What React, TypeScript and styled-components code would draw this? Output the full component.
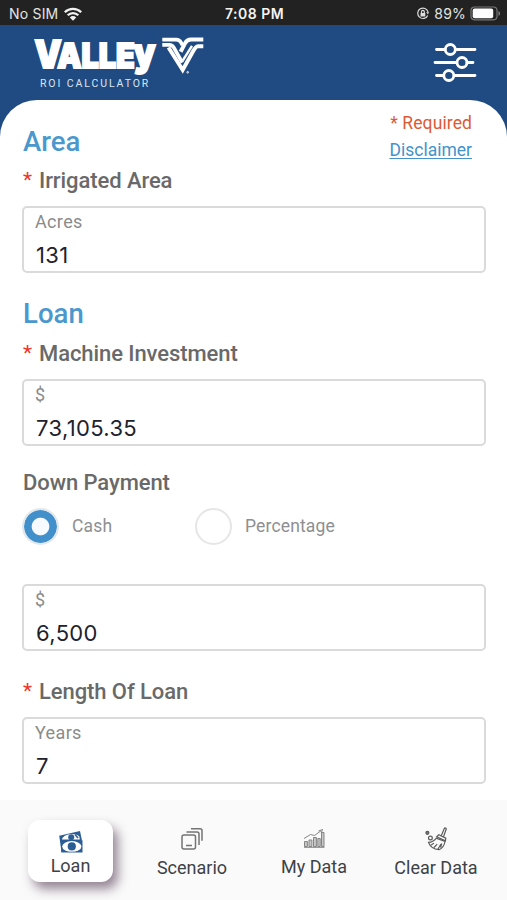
import React from 'react';
import styled, { createGlobalStyle } from 'styled-components';

const Global = createGlobalStyle`
  * { box-sizing: border-box; }
  html, body { margin: 0; padding: 0; background: #fff; }
  body { font-family: Roboto, "Liberation Sans", sans-serif; }
`;

const Screen = styled.div`
  width: 507px;
  height: 900px;
  display: flex;
  flex-direction: column;
  overflow: hidden;
  background: #1f4b82;
`;

const StatusBar = styled.div`
  height: 25px;
  flex: none;
  display: grid;
  grid-template-columns: 1fr auto 1fr;
  align-items: center;
  padding: 2px 6px 0 9px;
  background: #222222;
  color: #e4e4e4;
  font: 400 14px/22px Inter, sans-serif;
`;

const StatusGroup = styled.div<{ $end?: boolean }>`
  display: flex;
  align-items: center;
  justify-content: ${p => (p.$end ? 'flex-end' : 'flex-start')};
  gap: ${p => (p.$end ? '4px' : '6px')};
  letter-spacing: 0.2px;
`;

const Clock = styled.div`
  padding-right: 1px;
  font-weight: 600;
  letter-spacing: 0.5px;
  color: #f4f4f4;
`;

const Header = styled.header`
  height: 75px;
  flex: none;
  display: flex;
  justify-content: space-between;
  padding: 12px 29px 0 34px;
`;

const Brand = styled.div`
  display: flex;
  flex-direction: column;
`;

const LogoRow = styled.div`
  display: flex;
  height: 40px;
  gap: 3px;
`;

const Tagline = styled.div`
  margin: 1px 0 0 6px;
  font: 400 10.5px/12px Roboto, sans-serif;
  letter-spacing: 1.9px;
  color: #dbe6f3;
`;

const SlidersSlot = styled.div`
  padding-top: 6px;
`;

const Panel = styled.main`
  height: 700px;
  flex: none;
  display: flex;
  flex-direction: column;
  padding: 0 22px;
  background: #fff;
  border-radius: 37px 37px 0 0;
`;

const TopRow = styled.div`
  height: 65px;
  display: flex;
  justify-content: space-between;
`;

const Notes = styled.div`
  display: flex;
  flex-direction: column;
  align-items: flex-end;
  padding: 10px 13px 0 0;
  font-size: 17.5px;
  line-height: 27px;
`;

const Required = styled.span`
  letter-spacing: 0.1px;
  color: #dc5a35;
`;

const Disclaimer = styled.a`
  color: #4592ca;
  text-decoration: underline;
  text-decoration-thickness: 1px;
  text-underline-offset: 2px;
`;

const Heading = styled.h2<{ $top: number }>`
  margin: ${p => p.$top}px 0 0 1px;
  font-size: 27.5px;
  line-height: 32px;
  font-weight: 500;
  letter-spacing: 0.05px;
  color: #4a98cd;
`;

const Label = styled.div<{ $top: number }>`
  margin: ${p => p.$top}px 0 0 1px;
  height: 26px;
  display: flex;
  font-size: 22px;
  line-height: 26px;
  font-weight: 500;
  letter-spacing: -0.08px;
  color: #696969;
  white-space: nowrap;
`;

const Star = styled.span`
  width: 16px;
  font-size: 21px;
  line-height: 25px;
  font-weight: 400;
  color: #f0352a;
`;

const Field = styled.div<{ $top: number }>`
  margin: ${p => p.$top}px 0 0;
  width: 464px;
  height: 67px;
  flex: none;
  padding: 3px 11px;
  border: 2px solid #dadada;
  border-radius: 5px;
`;

const Unit = styled.div`
  font-size: 18px;
  line-height: 22px;
  letter-spacing: 0.35px;
  color: #8b8b8b;
`;

const Value = styled.div`
  margin: 9px 0 0 1px;
  font: 400 22px/26px Inter, sans-serif;
  letter-spacing: 0.35px;
  color: #20222e;
`;

const Options = styled.div`
  height: 38px;
  margin-top: 11px;
  display: grid;
  grid-template-columns: 173px 1fr;
`;

const Option = styled.div`
  display: flex;
  align-items: center;
  gap: 13px;
  font-size: 17.5px;
  letter-spacing: 0.15px;
  color: #8d8f92;
`;

const Radio = styled.span<{ $on?: boolean }>`
  width: 37px;
  height: 37px;
  border-radius: 50%;
  border: 2px solid ${p => (p.$on ? '#e4e7ea' : '#e6e6e6')};
  background: ${p => (p.$on ? 'radial-gradient(circle, #f7faff 8.3px, #4190cb 9.3px)' : '#fff')};
  background-clip: padding-box;
`;

const Nav = styled.nav`
  height: 100px;
  flex: none;
  display: grid;
  grid-template-columns: 85px 158px 86px 158px;
  padding-left: 28px;
  background: #fafafa;
`;

const Tab = styled.div<{ $active?: boolean; $gap: number }>`
  display: flex;
  flex-direction: column;
  align-items: center;
  margin-top: 20px;
  height: 62px;
  padding-top: ${p => (p.$active ? 10 : 7)}px;
  gap: ${p => p.$gap}px;
  border-radius: 12px;
  background: ${p => (p.$active ? '#fff' : 'transparent')};
  box-shadow: ${p => (p.$active ? '5px 7px 11px rgba(75, 50, 75, 0.58)' : 'none')};
  font-size: 18px;
  line-height: 22px;
  color: #3d4246;
  white-space: nowrap;
`;

const Wordmark = () => (
  <svg width="125" height="40" viewBox="0 0 125 40" fill="#fff" stroke="#fff" strokeWidth="2"
    fontFamily="Inter, sans-serif" fontWeight="900" overflow="visible">
    <text x="0.5" y="31.2" textLength="121" lengthAdjust="spacingAndGlyphs">
      <tspan fontSize="38">V</tspan><tspan dx="-5" fontSize="34">ALLE</tspan><tspan dx="-1" fontSize="38" dy="-2.2">y</tspan>
    </text>
  </svg>
);

const Emblem = () => (
  <svg width="42" height="38" viewBox="0 0 42 38" fill="none" stroke="#fff" strokeWidth="3.7">
    <path d="M.3 2.6h14c2.4 0 3.6 1 4.5 2.6l1.7 3" />
    <path d="M.3 7.8h7.2c2.2 0 3.2.8 4.2 2.6l8.6 15.2" />
    <path d="M6.5 10.5 20.7 33l9-16.2c2.2-4 3.6-7.6 6.3-7.6h5.3" strokeWidth="3.9" />
    <path d="M41.3 2.6H29c-3.3 0-4.8 1.4-6 3.8l-4.4 8.3" strokeWidth="4" />
    <path d="M30 8.8 20.8 23.5" strokeWidth="2.4" />
    <circle cx="25.7" cy="35.3" r=".8" strokeWidth="1" />
  </svg>
);

const Sliders = () => (
  <svg width="45" height="40" viewBox="0 0 45 40" fill="none" stroke="#fff" strokeWidth="2.8" strokeLinecap="round">
    <path d="M3.5 6.5H12M24 6.5H42M2 19.5H23M34 19.5h6M3.5 32.5H10M22 32.5H42" />
    <circle cx="17.3" cy="6.5" r="5" />
    <circle cx="29" cy="19.5" r="5" />
    <circle cx="15.8" cy="32.5" r="5" />
  </svg>
);

const Wifi = () => (
  <svg width="18" height="14" viewBox="0 0 18 14" fill="none" stroke="#f1f1f1" strokeWidth="2.3">
    <path d="M.8 5.3c4.6-4.6 11.8-4.6 16.4 0M3.7 8.3c3-3 7.6-3 10.6 0" />
    <path d="M5.8 10.4c1.8-1.8 4.6-1.8 6.4 0L9 13.7z" fill="#f1f1f1" stroke="none" />
  </svg>
);

const RotationLock = () => (
  <svg width="14" height="13" viewBox="0 0 13 13" fill="none" stroke="#dedede" strokeWidth="1.2">
    <path d="M11.2 8.4A5.2 5.2 0 1 1 11.5 5" />
    <path d="M9.6 5.2h3.2l-1.5 2z" fill="#dedede" stroke="none" />
    <rect x="4" y="6" width="4.8" height="3.5" fill="#dedede" stroke="none" />
    <path d="M5 6V4.7a1.4 1.4 0 0 1 2.8 0V6" />
  </svg>
);

const Battery = () => (
  <svg width="31" height="15" viewBox="0 0 31 15" fill="none">
    <rect x="1" y="1" width="26" height="12.8" rx="3.5" stroke="#777" strokeWidth="1.2" />
    <rect x="2.7" y="2.6" width="20.5" height="9.6" rx="2" fill="#fff" />
    <path d="M28.5 5v4.8c2-.8 2-4 0-4.8z" fill="#888" />
  </svg>
);

const LoanIcon = () => (
  <svg width="26" height="24" viewBox="0 0 26 24">
    <path d="M1.2 5.8 22 1l2 9.5L3.5 22z" fill="#2c5e96" />
    <path d="M4 9c1-2.5 4-4.6 8-4.8 4-.4 7 .4 9.3 2.3l.5 3H4.2z" fill="#fff" />
    <circle cx="13.2" cy="7.2" r="3" fill="#2c5e96" />
    <path d="M17 4.5 20 8" stroke="#2c5e96" strokeWidth="1.5" />
    <path d="M3.2 10.3h21.3V22.5H3.2z" fill="#2c5e96" />
    <ellipse cx="13.8" cy="16.4" rx="9.6" ry="5.3" fill="#fff" />
    <circle cx="13.8" cy="16.4" r="4.1" fill="#2c5e96" />
  </svg>
);

const ScenarioIcon = () => (
  <svg width="24" height="24" viewBox="0 0 24 24" fill="none" stroke="#747474" strokeWidth="1.5">
    <rect x="2" y="8" width="13.5" height="14" rx="2" />
    <path d="M6.5 5H17q2 0 2 2v11M11 1.8h9q2 0 2 2v10M6 18.5h6" />
  </svg>
);

const ChartIcon = () => (
  <svg width="24" height="24" viewBox="0 0 24 24" fill="#c8c8c8" stroke="#858585" strokeWidth="1">
    <path d="M2.5 14.5h2.9v5H2.5zM7 13h2.9v6.5H7zM11.5 10.5h2.9v9h-2.9zM15.8 11.5h2.4v8h-2.4zM19.5 5.5H22v14h-2.5zM2 20.3h20.5" />
    <path d="M2 11.5 8.5 7.5l4 1L19 3.8M16.5 4l4-1.5-1.3 3.6" fill="none" />
  </svg>
);

const BroomIcon = () => (
  <svg width="24" height="24" viewBox="0 0 24 24" fill="none" stroke="#5c5c5c" strokeWidth="1.2">
    <path d="m17 9.5 3.3-8c.5-1 2.3-.3 1.9.8L19.4 10M12.7 9.8l2.1-2 7 3.3-.4 2.8z" />
    <path d="M12.2 11.3C10 14 7.5 15.2 4.5 15.4c1.4 4 5.5 6.8 10.5 7.3 4-1.8 5.5-4.8 6-8.2zM7 18l3-1.7M10 20.5l3.2-3.3M14 22l3-5M16.5 20.5l1.3-4" />
    <circle cx="6.4" cy="11" r="1.9" />
    <circle cx="3.4" cy="5.8" r="1.5" fill="#777" />
  </svg>
);

type EntryProps = { unit: string; value: string; top: number };

const Entry = ({ unit, value, top }: EntryProps) => (
  <Field $top={top}>
    <Unit>{unit}</Unit>
    <Value>{value}</Value>
  </Field>
);

export default function App() {
  return (
    <Screen>
      <Global />
      <StatusBar>
        <StatusGroup>No SIM<Wifi /></StatusGroup>
        <Clock>7:08 PM</Clock>
        <StatusGroup $end><RotationLock />89%<Battery /></StatusGroup>
      </StatusBar>
      <Header>
        <Brand>
          <LogoRow><Wordmark /><Emblem /></LogoRow>
          <Tagline>ROI CALCULATOR</Tagline>
        </Brand>
        <SlidersSlot><Sliders /></SlidersSlot>
      </Header>
      <Panel>
        <TopRow>
          <Heading $top={26}>Area</Heading>
          <Notes>
            <Required>* Required</Required>
            <Disclaimer>Disclaimer</Disclaimer>
          </Notes>
        </TopRow>
        <Label $top={3}><Star>*</Star>Irrigated Area</Label>
        <Entry unit="Acres" value="131" top={12} />
        <Heading $top={25}>Loan</Heading>
        <Label $top={11}><Star>*</Star>Machine Investment</Label>
        <Entry unit="$" value="73,105.35" top={12} />
        <Label $top={24}>Down Payment</Label>
        <Options>
          <Option><Radio $on />Cash</Option>
          <Option><Radio />Percentage</Option>
        </Options>
        <Entry unit="$" value="6,500" top={39} />
        <Label $top={28}><Star>*</Star>Length Of Loan</Label>
        <Entry unit="Years" value="7" top={12} />
      </Panel>
      <Nav>
        <Tab $active $gap={1}><LoanIcon />Loan</Tab>
        <Tab $gap={6}><ScenarioIcon />Scenario</Tab>
        <Tab $gap={5}><ChartIcon />My Data</Tab>
        <Tab $gap={6}><BroomIcon />Clear Data</Tab>
      </Nav>
    </Screen>
  );
}
